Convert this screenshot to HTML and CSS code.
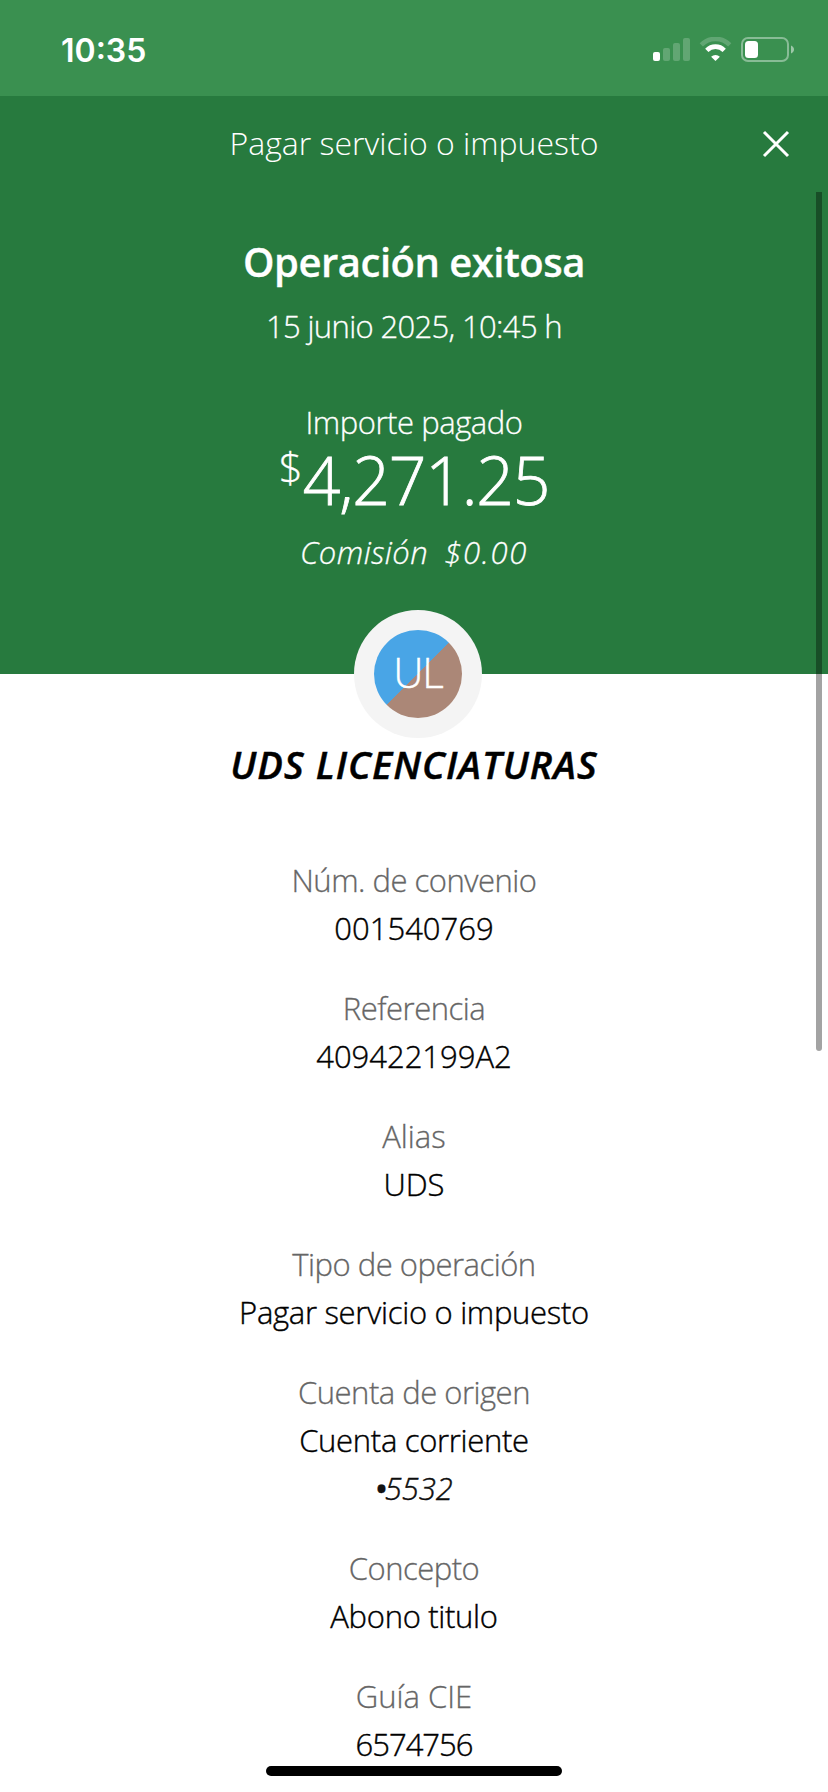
FILE: index.html
```
<!DOCTYPE html>
<html lang="es">
<head>
<meta charset="UTF-8">
<title>Pagar servicio o impuesto</title>
<link rel="stylesheet" href="styles.css">
</head>
<body>
	<div class="screen">
		<div class="statusBar">
			<span class="clock">10:35</span>
			<svg class="statusIcons" width="144" height="28" viewBox="0 0 144 28">
				<!-- signal -->
				<rect x="1" y="15" width="7" height="9" rx="2" fill="#fff"/>
				<g fill="#fff" opacity="0.2">
					<rect x="11" y="11" width="7" height="13" rx="2"/>
					<rect x="21" y="6" width="7" height="18" rx="2"/>
					<rect x="31" y="1" width="7" height="23" rx="2"/>
				</g>
				<!-- wifi -->
				<path d="M49.3 7.8a20 20 0 0 1 28.4 0" fill="none" stroke="#fff" stroke-width="4.6" opacity="0.2"/>
				<path d="M54.8 13.3a12.2 12.2 0 0 1 17.4 0" fill="none" stroke="#fff" stroke-width="4.6"/>
				<path d="M63.500 24l-4.400-4.300a6.300 6.300 0 0 1 8.800 0z" fill="#fff"/>
				<!-- battery -->
				<rect x="90" y="1" width="46" height="23" rx="6" fill="none" stroke="#fff" stroke-width="2" opacity="0.4"/>
				<rect x="93" y="4" width="13" height="17" rx="3.500" fill="#fff"/>
				<path d="M139 8.500c4 1.500 4 6.500 0 8z" fill="#fff" opacity="0.5"/>
			</svg>
		</div>
		<div class="navBar">
			<span class="navTitle">Pagar servicio o impuesto</span>
			<svg class="close" width="28" height="28" viewBox="0 0 28 28">
				<path d="M2 2L26 26M26 2L2 26" stroke="#fff" stroke-width="3"/>
			</svg>
		</div>
		<div class="summary">
			<h1 class="heading">Operación exitosa</h1>
			<div class="date">15 junio 2025, 10:45 h</div>
			<div class="amountLabel">Importe pagado</div>
			<div class="amount"><span class="currency">$</span><span class="figure">4,271.25</span></div>
			<div class="fee"><span>Comisión</span><span class="feeAmount">$0.00</span></div>
		</div>
		<div class="avatar"><div class="initials">UL</div></div>
		<h2 class="payee">UDS LICENCIATURAS</h2>
		<div class="details">
			<div class="item">
				<div class="label">Núm. de convenio</div>
				<div class="value number">001540769</div>
			</div>
			<div class="item">
				<div class="label">Referencia</div>
				<div class="value number">409422199A2</div>
			</div>
			<div class="item">
				<div class="label short">Alias</div>
				<div class="value short">UDS</div>
			</div>
			<div class="item">
				<div class="label">Tipo de operación</div>
				<div class="value">Pagar servicio o impuesto</div>
			</div>
			<div class="item">
				<div class="label">Cuenta de origen</div>
				<div class="value">Cuenta corriente</div>
				<div class="value account"><span class="bullet">•</span>5532</div>
			</div>
			<div class="item">
				<div class="label">Concepto</div>
				<div class="value">Abono titulo</div>
			</div>
			<div class="item">
				<div class="label short">Guía CIE</div>
				<div class="value guide">6574756</div>
			</div>
		</div>
		<div class="scrollbar"></div>
		<div class="homeBar"></div>
	</div>
</body>
</html>
```
FILE: styles.css
```
body{
	margin: 0;
	background: #ffffff;
	font-family: "Open Sans", "Noto Sans", sans-serif;
	font-weight: 300;
	font-size: 31px;
	line-height: 48px;
}

.screen{
	position: relative;
	width: 828px;
	height: 1792px;
	overflow: hidden;
	text-align: center;
	display: flex;
	flex-direction: column;
	align-items: center;
}

.statusBar{
	box-sizing: border-box;
	flex: none;
	width: 100%;
	height: 96px;
	padding: 26px 32px 0 61px;
	background: #3a9050;
	display: flex;
	justify-content: space-between;
}

.clock{
	padding-top: 1px;
	color: #ffffff;
	font-family: Inter, sans-serif;
	font-weight: 600;
	font-size: 32px;
}

.statusIcons{
	margin-top: 11px;
}

.navBar{
	box-sizing: border-box;
	flex: none;
	width: 100%;
	height: 96px;
	padding: 0 38px;
	background: #277a3e;
	color: #ffffff;
	display: grid;
	grid-template-columns: 28px 1fr 28px;
	align-items: center;
}

.navTitle{
	grid-column: 2;
	padding-bottom: 2px;
	font-size: 32px;
}

.close{
	grid-column: 3;
}

.summary{
	box-sizing: border-box;
	flex: none;
	width: 100%;
	height: 482px;
	padding-top: 46px;
	background: #277a3e;
	color: #ffffff;
	-webkit-text-stroke: 0.3px #ffffff;
}

.heading{
	margin: 0;
	font-size: 40px;
	font-weight: 600;
	line-height: 48px;
	letter-spacing: -0.5px;
}

.date{
	margin-top: 16px;
	letter-spacing: -0.65px;
}

.amountLabel{
	margin-top: 48px;
	letter-spacing: -0.45px;
}

.amount{
	height: 69px;
	display: flex;
	justify-content: center;
	line-height: 66px;
	-webkit-text-stroke: 0.8px #ffffff;
}

.currency{
	font-size: 42px;
	line-height: 42px;
	-webkit-text-stroke: 0.3px #ffffff;
}

.figure{
	font-size: 66px;
	letter-spacing: -1.2px;
}

.fee{
	margin-top: 13px;
	display: flex;
	justify-content: center;
	gap: 16px;
	font-style: italic;
	letter-spacing: 0.45px;
}

.feeAmount{
	letter-spacing: 1.7px;
}

.avatar{
	box-sizing: border-box;
	flex: none;
	width: 128px;
	height: 128px;
	margin: -64px 0 0 8px;
	padding: 20px;
	border-radius: 50%;
	background: #f4f4f4;
}

.initials{
	height: 88px;
	border-radius: 50%;
	background: linear-gradient(135deg, #49a5e6 50%, #ab8777 50%);
	color: #ffffff;
	font-size: 42px;
	line-height: 83px;
	letter-spacing: -1px;
	-webkit-text-stroke: 0.4px #ffffff;
}

.payee{
	margin: 0;
	font-size: 38px;
	font-weight: 600;
	font-style: italic;
	line-height: 52px;
	letter-spacing: 1.1px;
	-webkit-text-stroke: 0.5px #000000;
}

.details{
	margin-top: 66px;
	display: flex;
	flex-direction: column;
	gap: 32px;
}

.label{
	color: #666666;
	letter-spacing: -0.5px;
	-webkit-text-stroke: 0.3px #666666;
}

.value{
	color: #000000;
	letter-spacing: -0.3px;
	-webkit-text-stroke: 0.4px #000000;
}

.number{
	letter-spacing: 0;
}

.short{
	letter-spacing: 0;
}

.guide{
	letter-spacing: -1px;
}

.account{
	color: #121212;
	font-style: italic;
	letter-spacing: 0;
}

.bullet{
	font-weight: 600;
	letter-spacing: -2px;
}

.scrollbar{
	position: absolute;
	top: 192px;
	left: 816px;
	width: 6px;
	height: 859px;
	border-radius: 0 0 3px 3px;
	background: rgba(0,0,0,0.36);
}

.homeBar{
	position: absolute;
	top: 1766px;
	left: 266px;
	width: 296px;
	height: 10px;
	border-radius: 5px;
	background: #000000;
}
```
